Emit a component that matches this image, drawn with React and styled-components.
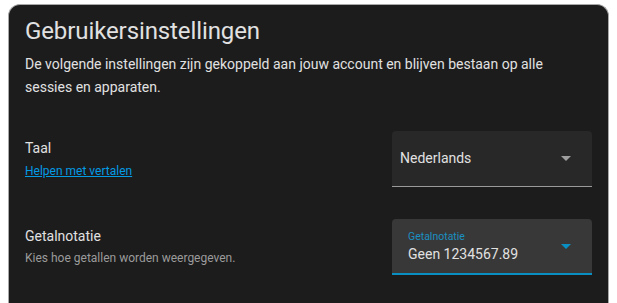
import React from "react";
import styled, { createGlobalStyle } from "styled-components";

const GlobalStyle = createGlobalStyle`
  html, body {
    margin: 0;
    padding: 0;
    background: #ffffff;
    overflow: hidden;
  }
  body {
    font-family: Roboto, "Noto Sans", sans-serif;
    -webkit-font-smoothing: antialiased;
  }
`;

const Page = styled.div`
  padding: 4px 8px 0 8px;
  width: 601px;
`;

const Card = styled.div`
  background: #1c1c1c;
  border: 1px solid #a8a8a8;
  border-bottom: none;
  border-radius: 12px 12px 0 0;
  min-height: 320px;
  color: #e1e1e1;
`;

const Header = styled.h1`
  margin: 0;
  padding: 10px 16px 0 16px;
  font-size: 24px;
  font-weight: 400;
  line-height: 32px;
  letter-spacing: -0.1px;
  color: #e1e1e1;
`;

const Intro = styled.p`
  margin: 0;
  padding: 6px 50px 0 16px;
  font-size: 14px;
  line-height: 23px;
  color: #e1e1e1;
`;

const Rows = styled.div`
  padding-top: 16px;
  display: flex;
  flex-direction: column;
`;

const Row = styled.div`
  display: flex;
  align-items: center;
  justify-content: space-between;
  padding: 16px 16px 16px 16px;
`;

const Info = styled.div`
  display: flex;
  flex-direction: column;
  gap: 3px;
`;

const Name = styled.div`
  font-size: 14px;
  line-height: 20px;
  color: #e1e1e1;
`;

const Description = styled.div`
  font-size: 12px;
  line-height: 19px;
  color: #9b9b9b;
`;

const HelpLink = styled.a`
  font-size: 12px;
  line-height: 20px;
  color: #039be5;
  text-decoration: underline;
  cursor: pointer;
`;

const Select = styled.div`
  position: relative;
  width: 200px;
  height: 56px;
  box-sizing: border-box;
  background: ${(p) => (p.$focused ? "#383838" : "#282828")};
  border-radius: 4px 4px 0 0;
  border-bottom: ${(p) => (p.$focused ? "2px solid #0a8fc2" : "1px solid #9a9a9a")};
  display: flex;
  flex-direction: column;
  justify-content: ${(p) => (p.$labelled ? "flex-start" : "center")};
  padding: ${(p) => (p.$labelled ? "12px 40px 0 16px" : "0 40px 0 8px")};
  cursor: pointer;
`;

const FloatLabel = styled.span`
  font-size: 10.5px;
  line-height: 12px;
  color: #1a8fc0;
`;

const Value = styled.span`
  font-size: 14px;
  line-height: 20px;
  color: #e1e1e1;
  margin-top: ${(p) => (p.$labelled ? "1px" : "-2px")};
`;

const Arrow = styled.svg`
  position: absolute;
  right: 21px;
  top: 25px;
`;

const DropArrow = ({ color }) => (
  <Arrow width="10" height="5" viewBox="0 0 10 5">
    <path d="M0 0 L5 5 L10 0 Z" fill={color} />
  </Arrow>
);

const App = () => {
  return (
    <>
      <GlobalStyle />
      <Page>
        <Card>
          <Header>Gebruikersinstellingen</Header>
          <Intro>
            De volgende instellingen zijn gekoppeld aan jouw account en blijven
            bestaan op alle sessies en apparaten.
          </Intro>
          <Rows>
            <Row>
              <Info>
                <Name>Taal</Name>
                <HelpLink>Helpen met vertalen</HelpLink>
              </Info>
              <Select>
                <Value>Nederlands</Value>
                <DropArrow color="#9e9e9e" />
              </Select>
            </Row>
            <Row>
              <Info>
                <Name>Getalnotatie</Name>
                <Description>Kies hoe getallen worden weergegeven.</Description>
              </Info>
              <Select $focused $labelled>
                <FloatLabel>Getalnotatie</FloatLabel>
                <Value $labelled>Geen 1234567.89</Value>
                <DropArrow color="#0a8fc2" />
              </Select>
            </Row>
          </Rows>
        </Card>
      </Page>
    </>
  );
};

export default App;
